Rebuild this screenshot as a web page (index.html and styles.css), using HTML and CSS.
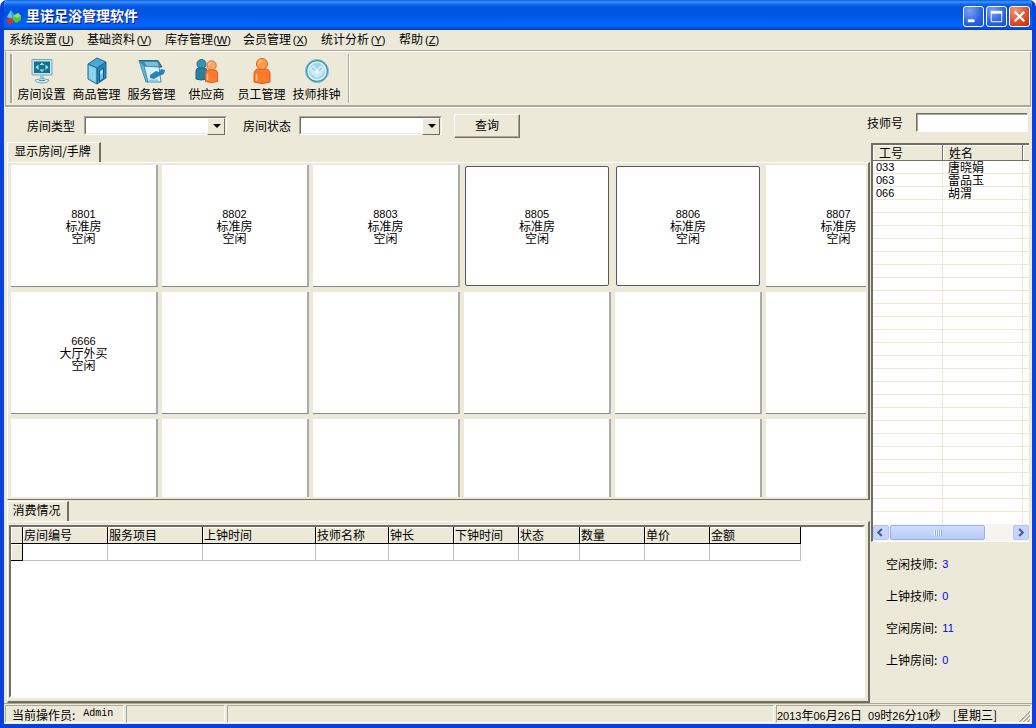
FILE: index.html
```html
<!DOCTYPE html>
<html lang="zh-CN">
<head>
<meta charset="utf-8">
<title>里诺足浴管理软件</title>
<link rel="stylesheet" href="styles.css">
</head>
<body>
<div class="window">
  <header class="titlebar">
    <svg class="app-icon" viewBox="0 0 16 16" aria-hidden="true"><path d="M5 1L10 8L6 11L1 8Z" fill="#2f9be0"/><path d="M5 1L6 9L1 8Z" fill="#6cc7f5"/><path d="M7 7L12 4L15 7L15 11L10 14L7 11Z" fill="#4fc92c"/><path d="M7 7L12 4L15 7L11 9Z" fill="#8de85b"/><circle cx="4" cy="12" r="3" fill="#e02b2b"/></svg>
    <h1 class="title">里诺足浴管理软件</h1>
    <button class="winbtn" aria-label="最小化"><svg viewBox="0 0 20 20"><path d="M4 14.500H11" stroke="#fff" stroke-width="3"/></svg></button>
    <button class="winbtn" aria-label="最大化"><svg viewBox="0 0 20 20"><path d="M4.500 5V15.500H15.500V5" fill="none" stroke="#fff"/><path d="M4 5.500H16" stroke="#fff" stroke-width="3"/></svg></button>
    <button class="winbtn close" aria-label="关闭"><svg viewBox="0 0 20 20"><path d="M5 5L15 15M15 5L5 15" stroke="#fff" stroke-width="2.400"/></svg></button>
  </header>
  <nav class="menubar">
    <button class="menu">系统设置<span class="key">(<u>U</u>)</span></button>
    <button class="menu">基础资料<span class="key">(<u>V</u>)</span></button>
    <button class="menu">库存管理<span class="key">(<u>W</u>)</span></button>
    <button class="menu">会员管理<span class="key">(<u>X</u>)</span></button>
    <button class="menu">统计分析<span class="key">(<u>Y</u>)</span></button>
    <button class="menu">帮助<span class="key">(<u>Z</u>)</span></button>
  </nav>
  <div class="toolbar">
    <div class="tools">
      <button class="tool"><svg viewBox="0 0 28 28"><path d="M4 2.500H24V18H4Z" fill="#c8e3ed" stroke="#76a9bd"/><path d="M6 4.500H22V16H6Z" fill="#12728f"/><path d="M14 5.500L16.500 8H11.500ZM14 15L16.500 12.500H11.500ZM7.500 10.250L10.500 7.500V13ZM20.500 10.250L17.500 7.500V13Z" fill="#a8e4f0"/><path d="M12 18.500H16V22H12Z" fill="#9cc6d6"/><path d="M7 23Q14 20 21 23Q20 26 14 26T7 23Z" fill="#d8edf3" stroke="#6fa7bb"/><path d="M11 23.500H17" stroke="#4793ae"/></svg><span>房间设置</span></button>
      <button class="tool"><svg viewBox="0 0 28 28"><path d="M5 7L14 1L23 5L14 11Z" fill="#4ba9d6" stroke="#1d6b94"/><path d="M5 7L14 11V27L5 22Z" fill="#7fcdf0" stroke="#1d6b94"/><path d="M14 11L23 5V21L14 27Z" fill="#2487bb" stroke="#1d6b94"/><path d="M16.500 13.500L20.500 11V21.500L16.500 24.500Z" fill="#6fc3e6" stroke="#125a80"/><path d="M17.500 14.500L19.500 13V16L17.500 17.500Z" fill="#d3f1fb"/><path d="M8 10V22M11 11.500V23.500" stroke="#a9e0f7"/></svg><span>商品管理</span></button>
      <button class="tool"><svg viewBox="0 0 28 28"><path d="M1 3.500H20L24 10L6 11Z" fill="#3a86ad" stroke="#2a6b8c"/><path d="M5 9L9 25H23L21 10Z" fill="#d9f0f7" stroke="#3f8fb5"/><path d="M1 3.500L6 9L10 25L8 25Z" fill="#65b6d6" stroke="#3f8fb5"/><path d="M6 5L19 5L21 9L9 9Z" fill="#7dbdd9"/><path d="M12 18L18 14L21 15L23 12L27 13L26 17L21 19L16 22L12 21Z" fill="#2a83b4"/><path d="M11 23.500H20" stroke="#8cc9e0" stroke-width="2"/></svg><span>服务管理</span></button>
      <button class="tool"><svg viewBox="0 0 28 28"><circle cx="8.500" cy="7" r="4.500" fill="#3a93ad" stroke="#1f6f8c"/><path d="M3 14Q3 11 6 11H11Q14 11 14 14V22Q8 24 3 22Z" fill="#2a7f9e" stroke="#156a88"/><circle cx="18.500" cy="8.500" r="4.700" fill="#ffa467" stroke="#e06d2a"/><path d="M12.500 16Q12.500 13 15.500 13H21.500Q24.500 13 24.500 16V24.500Q18.500 26.500 12.500 24.500Z" fill="#ff7b31" stroke="#e45a14"/><path d="M15.500 8.500Q16 5.500 19 5.500M14.500 17V23" stroke="#ffc49a" fill="none" stroke-width="1.500"/></svg><span>供应商</span></button>
      <button class="tool"><svg viewBox="0 0 28 28"><path d="M6 17Q6 12 11 12H17Q22 12 22 17V25Q14 28 6 25Z" fill="#ff7a2c" stroke="#df5712"/><circle cx="14" cy="7" r="5.500" fill="#ff9a4d" stroke="#db641b"/><path d="M10.500 7Q11 3.500 14.500 3.500M8.500 17V24" stroke="#ffc48d" fill="none" stroke-width="1.500"/></svg><span>员工管理</span></button>
      <button class="tool"><svg viewBox="0 0 28 28"><circle cx="14" cy="14" r="11.500" fill="#3b91ac" stroke="#8fc0cf"/><circle cx="14" cy="14" r="9" fill="#9ed5ed" stroke="#e3f6fc" stroke-width="1.500"/><path d="M6 12L10 8L14 12L18 8L22 12L19 18L14 21L9 18Z" fill="#cdeaf6"/><path d="M9 11L14 15L19 11" fill="none" stroke="#79bedb"/><circle cx="14" cy="15" r="2" fill="#f0fafd"/></svg><span>技师排钟</span></button>
    </div>
  </div>
  <form class="filters">
    <label for="type">房间类型</label>
    <span class="combo type"><select id="type"><option></option></select></span>
    <label for="state">房间状态</label>
    <span class="combo"><select id="state"><option></option></select></span>
    <button class="query" type="button">查询</button>
    <label class="tech-label" for="tech">技师号</label>
    <input class="tech" id="tech" type="text">
  </form>
  <main class="main">
    <section class="rooms-pane">
      <div class="tabs"><button class="tab">显示房间/手牌</button></div>
      <div class="rooms-frame">
        <div class="rooms">
          <button class="room"><span class="num">8801</span>标准房<br>空闲</button>
          <button class="room"><span class="num">8802</span>标准房<br>空闲</button>
          <button class="room"><span class="num">8803</span>标准房<br>空闲</button>
          <button class="room busy"><span class="num">8805</span>标准房<br>空闲</button>
          <button class="room busy"><span class="num">8806</span>标准房<br>空闲</button>
          <button class="room"><span class="num">8807</span>标准房<br>空闲</button>
          <button class="room"><span class="num">6666</span>大厅外买<br>空闲</button>
          <div class="room"></div><div class="room"></div><div class="room"></div><div class="room"></div><div class="room"></div>
          <div class="room"></div><div class="room"></div><div class="room"></div><div class="room"></div><div class="room"></div><div class="room"></div>
        </div>
      </div>
    </section>
    <section class="bill-pane">
      <div class="tabs"><button class="tab small">消费情况</button></div>
      <div class="bill-frame">
        <div class="bill-view">
          <table class="bill">
            <colgroup><col class="c12"><col class="c85"><col class="c95"><col class="c113"><col class="c73"><col class="c65"><col class="c65"><col class="c61"><col class="c65"><col class="c65"><col class="c91"></colgroup>
            <thead><tr><th></th><th>房间编号</th><th>服务项目</th><th>上钟时间</th><th>技师名称</th><th>钟长</th><th>下钟时间</th><th>状态</th><th>数量</th><th>单价</th><th>金额</th></tr></thead>
            <tbody><tr><th></th><td></td><td></td><td></td><td></td><td></td><td></td><td></td><td></td><td></td><td></td></tr></tbody>
          </table>
        </div>
      </div>
    </section>
    <aside class="side">
      <div class="list">
        <table class="staff">
          <thead><tr><th class="id">工号</th><th class="name">姓名</th><th></th></tr></thead>
          <tbody>
            <tr><td class="num">033</td><td>唐晓娟</td><td></td></tr>
            <tr><td class="num">063</td><td>雷品玉</td><td></td></tr>
            <tr><td class="num">066</td><td>胡渭</td><td></td></tr>
          </tbody>
        </table>
        <div class="empty-rows"><i class="id"></i><i class="name"></i></div>
        <div class="scroll">
          <button class="arrow" aria-label="向左"><svg viewBox="0 0 15 15"><path d="M9 3.500L5 7.500L9 11.500" fill="none" stroke="#4d6185" stroke-width="2.500"/></svg></button>
          <div class="track"><div class="thumb"><i></i></div></div>
          <button class="arrow" aria-label="向右"><svg viewBox="0 0 15 15"><path d="M6 3.500L10 7.500L6 11.500" fill="none" stroke="#4d6185" stroke-width="2.500"/></svg></button>
        </div>
      </div>
      <dl class="stats">
        <div><dt>空闲技师:</dt><dd>3</dd></div>
        <div><dt>上钟技师:</dt><dd>0</dd></div>
        <div><dt>空闲房间:</dt><dd>11</dd></div>
        <div><dt>上钟房间:</dt><dd>0</dd></div>
      </dl>
    </aside>
  </main>
  <footer class="status">
    <div class="cell user">当前操作员:<span class="mono">Admin</span></div>
    <div class="cell blank"></div>
    <div class="cell fill"></div>
    <div class="cell clock"><span><b>2013</b>年<b>06</b>月<b>26</b>日</span><span><b>09</b>时<b>26</b>分<b>10</b>秒</span><span class="week">[星期三]</span>
      <svg class="grip" viewBox="0 0 12 12"><path d="M1 12L12 1M5 12L12 5M9 12L12 9" stroke="#aca899" stroke-width="2"/><path d="M0 12L12 0M4 12L12 4M8 12L12 8" stroke="#fff"/></svg></div>
  </footer>
</div>
</body>
</html>
```
FILE: styles.css
```css
* { box-sizing: border-box; }
body {
  margin: 0;
  background: #fff;
  color: #000;
  font: 12px/14px "Noto Sans CJK SC", sans-serif;
}
button, input, select { font: inherit; color: inherit; margin: 0; }
button { padding: 0; border: 0; background: none; white-space: nowrap; }
svg { display: block; }

.window {
  display: flex;
  flex-direction: column;
  height: 100vh;
  overflow: hidden;
  border: solid #0842d8;
  border-width: 0 4px 4px;
  border-radius: 7px 7px 0 0;
  background: #ece9d8;
}

/* title bar */
.titlebar {
  display: flex;
  flex: none;
  align-items: center;
  gap: 2px;
  height: 30px;
  margin: 0 -4px;
  padding: 3px 6px 0;
  background: linear-gradient(#0a5ae0 0, #3d95ff 2px, #1668ee 4px, #0055e2 7px, #0054e3 14px, #0262fb 22px, #0066ff 26px, #0450d8 28px, #003dd0 30px);
}
.app-icon { width: 16px; height: 16px; }
.title {
  flex: 1;
  margin: 0 0 4px 2px;
  color: #fff;
  font-size: 14px;
  line-height: 20px;
  text-shadow: 1px 1px #0a1883;
}
.winbtn {
  width: 21px;
  height: 21px;
  border: 1px solid #fff;
  border-radius: 3px;
  background: radial-gradient(circle at 30% 20%, #7ba3f5, #2a62e0 60%, #1d4fd0);
}
.close { background: radial-gradient(circle at 30% 20%, #f0997c, #dd4a25 60%, #bd2f0c); }

/* menu and toolbar */
.menubar {
  display: flex;
  flex: none;
  gap: 12px;
  height: 21px;
  padding: 0 5px 2px;
  border-bottom: 1px solid #aca899;
}
.key {
  display: inline-block;
  width: 18px;
  font: 11px/14px "Liberation Sans", sans-serif;
  text-align: center;
}
.toolbar {
  flex: none;
  height: 56px;
  margin: 0 1px;
  padding: 2px 4px;
  border: 1px solid #aca899;
  border-top-color: #fff;
  border-bottom: 2px solid #aca899;
}
.tools {
  display: inline-flex;
  height: 49px;
  padding-left: 2px;
  border-left: 2px solid #aca899;
  border-right: 1px solid #aca899;
  box-shadow: 1px 0 #fff, inset 1px 0 #fff;
}
.tool {
  display: flex;
  flex-direction: column;
  align-items: center;
  justify-content: space-between;
  width: 55px;
  padding: 3px 0 2px;
}
.tool:last-child { margin-right: 4px; }
.tool svg { width: 28px; height: 28px; }

/* filters */
.filters {
  display: flex;
  flex: none;
  align-items: center;
  height: 35px;
  margin: 0;
  padding: 1px 4px 0 23px;
  border-top: 1px solid #fff;
}
.combo {
  position: relative;
  width: 143px;
  margin: 0 12px 0 8px;
  border: 1px solid;
  border-color: #aca899 #fff #fff #aca899;
}
.type { margin: 0 16px 0 9px; }
.combo select {
  display: block;
  width: 100%;
  height: 17px;
  padding: 0;
  border: 1px solid;
  border-color: #716f64 #ece9d8 #ece9d8 #716f64;
  border-radius: 0;
  background: #fff;
  appearance: none;
}
.combo::before {
  position: absolute;
  top: 1px;
  right: 1px;
  width: 16px;
  height: 15px;
  border: 1px solid;
  border-color: #fff #716f64 #716f64 #fff;
  background: #ece9d8;
  content: "";
  pointer-events: none;
}
.combo::after {
  position: absolute;
  top: 7px;
  right: 5px;
  border: 4px solid transparent;
  border-top-color: #000;
  border-bottom: 0;
  content: "";
  pointer-events: none;
}
.query {
  width: 66px;
  height: 24px;
  padding-bottom: 2px;
  border: 1px solid;
  border-color: #fff #716f64 #716f64 #fff;
  box-shadow: inset -1px -1px #aca899;
}
.tech-label { margin: -6px 13px 0 auto; }
.tech {
  width: 112px;
  height: 19px;
  margin-top: -6px;
  padding: 0 2px;
  border: 1px solid;
  border-color: #716f64 #fff #fff #716f64;
  border-radius: 0;
  box-shadow: inset 1px 1px #aca899;
  background: #fff;
}

/* work area */
.main {
  display: grid;
  flex: 1;
  grid-template-columns: minmax(0, 1fr) 162px;
  grid-template-rows: minmax(0, 358fr) minmax(0, 203fr);
  min-height: 0;
}
.rooms-pane, .bill-pane { display: flex; flex-direction: column; min-height: 0; padding-left: 3px; }
.tabs { display: flex; flex: none; height: 20px; }
.tab {
  width: 94px;
  padding: 0 2px 4px 0;
  border: solid;
  border-width: 1px 2px 0 1px;
  border-color: #fff #716f64 #fff #fff;
}
.tab.small { width: 62px; }
.rooms-frame {
  flex: 1;
  min-height: 0;
  padding: 2px 2px 2px 3px;
  border: solid #716f64;
  border-width: 1px 2px 1px 1px;
  border-top-color: #fff;
  border-left-color: #fff;
}
.rooms {
  display: grid;
  grid-template-columns: repeat(6, 147px);
  grid-auto-rows: 122px;
  gap: 5px 4px;
  height: 100%;
  overflow: hidden;
}
.room {
  border-right: 2px solid #aaa;
  border-bottom: 1px solid #888;
  background: #fff;
  line-height: 12px;
}
.room .num { display: block; }
.busy { margin: 1px 2px 1px 1px; border: 1px solid #56565e; border-radius: 2px; }
.num { font: 11px/12px "Liberation Sans", sans-serif; }

.bill-pane { padding-top: 1px; }
.bill-frame {
  flex: 1;
  min-height: 0;
  padding: 3px 3px 3px 1px;
  border: solid #716f64;
  border-width: 1px 2px 2px 1px;
  border-top-color: #fff;
  border-left-color: #fff;
}
.bill-view {
  height: 100%;
  overflow: hidden;
  border: 2px solid #716f64;
  border-right-color: #fff;
  border-bottom-color: #fff;
  background: #fff;
}
.bill { table-layout: fixed; width: 790px; border-collapse: separate; border-spacing: 0; }
.bill th, .bill td { height: 17px; padding: 0 0 1px 1px; border: solid #c0c0c0; border-width: 0 1px 1px 0; }
.bill th {
  border-color: #000;
  background: #ece9d8;
  box-shadow: inset 1px 1px #fff;
  font-weight: 400;
  text-align: left;
}
.c12 { width: 12px; } .c85 { width: 85px; } .c95 { width: 95px; } .c113 { width: 113px; }
.c73 { width: 73px; } .c65 { width: 65px; } .c61 { width: 61px; } .c91 { width: 91px; }

/* technicians */
.side { display: flex; grid-row: 1 / 3; grid-column: 2; flex-direction: column; min-height: 0; padding: 1px 3px 0 1px; }
.list {
  display: flex;
  flex: 1;
  flex-direction: column;
  min-height: 0;
  border: solid #716f64;
  border-width: 2px 0 0 2px;
  border-bottom: 1px solid #fff;
  background: #fff;
}
.staff { table-layout: fixed; width: 100%; border-spacing: 0; }
.id { width: 70px; }
.name { width: 80px; }
.staff th {
  height: 16px;
  padding: 0 0 1px 6px;
  border: solid #716f64;
  border-width: 0 1px 1px 0;
  background: #ece9d8;
  box-shadow: inset 1px 1px #fff;
  font-weight: 400;
  line-height: 13px;
  text-align: left;
}
.staff td { height: 13px; padding: 0 0 0 5px; border: solid #ece9d8; border-width: 0 1px 1px 0; line-height: 12px; }
.staff td.num { padding-left: 3px; }
.staff th:last-child, .staff td:last-child { border-right: 0; }
.empty-rows {
  display: flex;
  flex: 1;
  background: repeating-linear-gradient(#fff 0 12px, #ece9d8 12px 13px);
}
.empty-rows i { border-right: 1px solid #ece9d8; }
.scroll { display: flex; flex: none; height: 17px; padding: 1px 0; background: #f5f4ee; }
.arrow {
  width: 16px;
  border: 1px solid #b4c8f6;
  border-radius: 2px;
  background: #c6d5fd;
}
.arrow svg { width: 13px; height: 13px; }
.track { flex: 1; padding: 0 1px; }
.thumb {
  display: flex;
  align-items: center;
  justify-content: center;
  width: 78%;
  height: 15px;
  border: 1px solid #98b1e4;
  border-radius: 2px;
  background: linear-gradient(#cfdcfe, #b9cbfb);
}
.thumb i { width: 8px; height: 6px; background: repeating-linear-gradient(90deg, #eef4fe 0 1px, #8cb0f8 1px 2px); }
.stats { display: grid; flex: none; gap: 17px; height: 161px; margin: 0; padding: 15px 15px 0; align-content: start; }
.stats div { display: flex; gap: 5px; }
.stats dd { margin: 0; color: #00f; font: 11px/15px "Liberation Sans", sans-serif; }

/* status bar */
.status { display: flex; flex: none; gap: 2px; height: 21px; padding: 1px 1px 1px; border-top: 1px solid #aca899; }
.cell { border: 1px solid; border-color: #aca899 #fff #fff #aca899; line-height: 17px; white-space: pre; }
.user { display: flex; align-items: center; gap: 8px; width: 119px; padding-left: 6px; }
.mono { font: 10px/14px "Liberation Mono", monospace; }
.blank { width: 99px; }
.fill { flex: 1; }
.clock { display: flex; gap: 6px; width: 255px; white-space: nowrap; }
.clock b { font: 11px "Liberation Sans", sans-serif; }
.week { margin-left: 6px; }
.grip { width: 12px; height: 12px; margin: 4px 0 0 auto; }
```
